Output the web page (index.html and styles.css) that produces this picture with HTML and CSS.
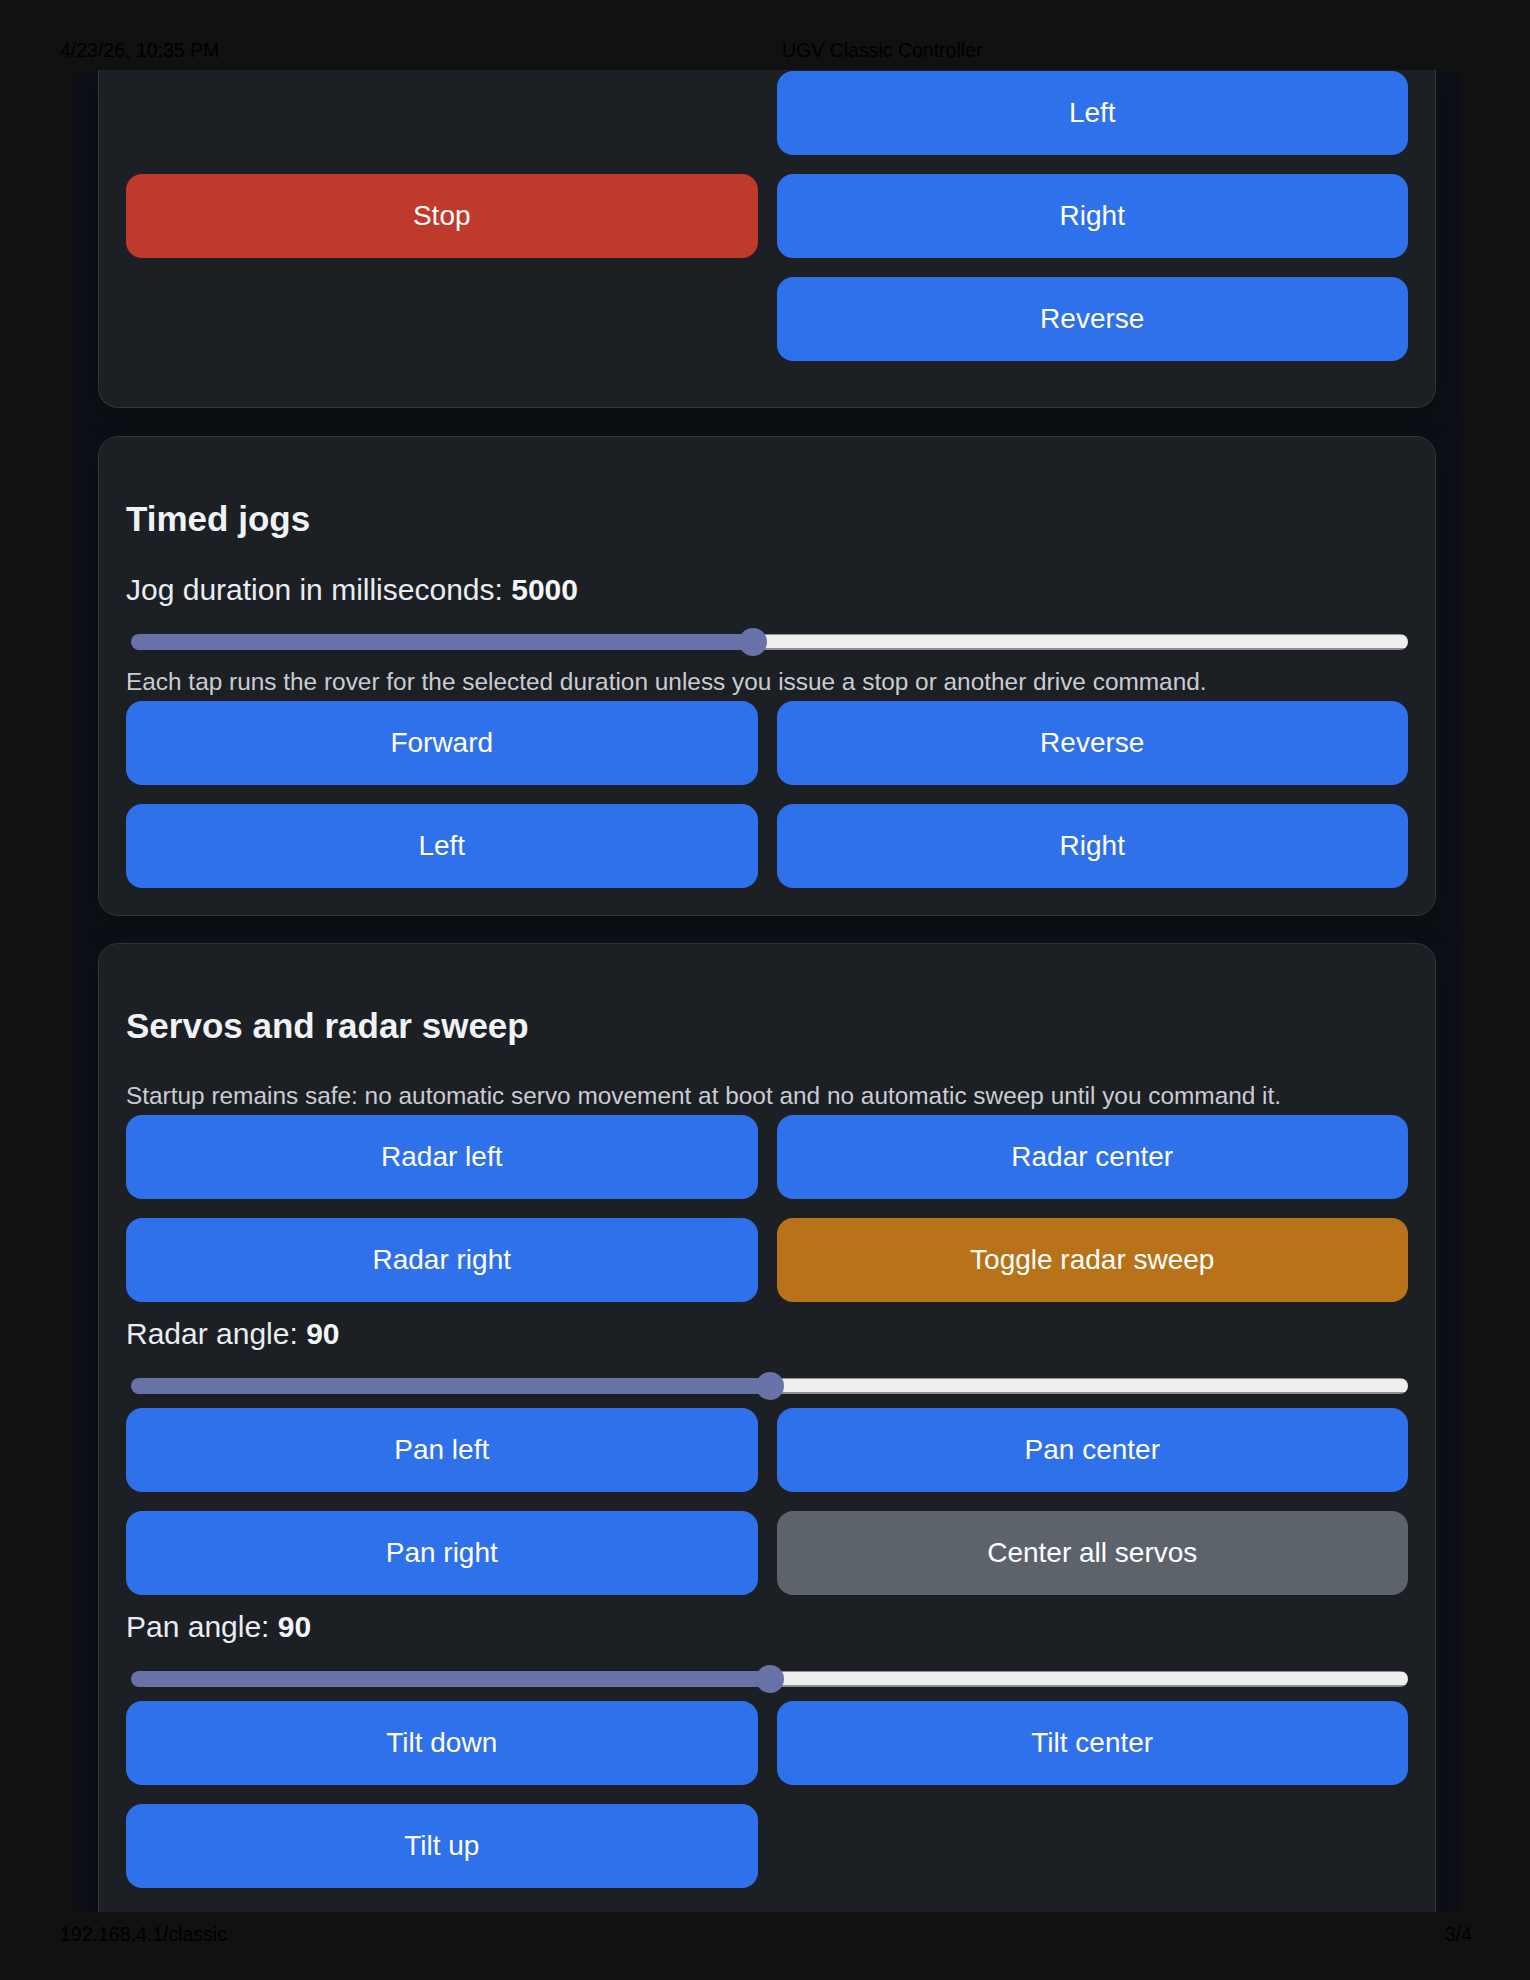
FILE: index.html
```html
<!DOCTYPE html>
<html lang="en">
<head>
<meta charset="utf-8">
<title>UGV Classic Controller</title>
<link rel="stylesheet" href="styles.css">
</head>
<body>
<header class="print-head">
  <span class="ph-date">4/23/26, 10:35 PM</span>
  <span class="ph-title">UGV Classic Controller</span>
</header>
<main class="sheet">
  <section class="card cont">
    <div class="grid">
      <div class="spacer"></div>
      <button class="btn">Left</button>
      <button class="btn red">Stop</button>
      <button class="btn">Right</button>
      <div class="spacer"></div>
      <button class="btn">Reverse</button>
    </div>
  </section>

  <section class="card">
    <h2 class="title">Timed jogs</h2>
    <div class="label">Jog duration in milliseconds: <b>5000</b></div>
    <input class="range" type="range" min="250" max="10000" step="250" value="5000" style="--p:48.8%">
    <p class="hint">Each tap runs the rover for the selected duration unless you issue a stop or another drive command.</p>
    <div class="grid">
      <button class="btn">Forward</button>
      <button class="btn">Reverse</button>
      <button class="btn">Left</button>
      <button class="btn">Right</button>
    </div>
  </section>

  <section class="card open">
    <h2 class="title">Servos and radar sweep</h2>
    <p class="hint">Startup remains safe: no automatic servo movement at boot and no automatic sweep until you command it.</p>
    <div class="grid">
      <button class="btn">Radar left</button>
      <button class="btn">Radar center</button>
      <button class="btn">Radar right</button>
      <button class="btn orange">Toggle radar sweep</button>
    </div>
    <div class="label">Radar angle: <b>90</b></div>
    <input class="range" type="range" min="0" max="180" value="90" style="--p:50.1%">
    <div class="grid">
      <button class="btn">Pan left</button>
      <button class="btn">Pan center</button>
      <button class="btn">Pan right</button>
      <button class="btn grey">Center all servos</button>
    </div>
    <div class="label">Pan angle: <b>90</b></div>
    <input class="range" type="range" min="0" max="180" value="90" style="--p:50.1%">
    <div class="grid">
      <button class="btn">Tilt down</button>
      <button class="btn">Tilt center</button>
      <button class="btn">Tilt up</button>
    </div>
  </section>
</main>
<footer class="print-foot">
  <span>192.168.4.1/classic</span>
  <span>3/4</span>
</footer>
</body>
</html>
```

FILE: styles.css
```css
html, body {
  margin: 0;
  padding: 0;
  background: #111111;
}

body {
  font-family: "Liberation Sans", Arial, Helvetica, sans-serif;
  width: 1530px;
  height: 1980px;
  overflow: hidden;
}

.print-head {
  height: 70px;
  box-sizing: border-box;
  padding: 38px 0 0 60px;
  display: grid;
  grid-template-columns: 722px auto;
  font-size: 19.5px;
  line-height: 24px;
  color: #000;
}

.sheet {
  box-sizing: border-box;
  height: 1842px;
  width: 1388px;
  margin-left: 73px;
  padding: 0 25px;
  background: #0d1117;
  overflow: hidden;
}

.card {
  display: flex;
  flex-direction: column;
  background: #1c1f24;
  border: 1px solid #30363d;
  border-radius: 20px;
  padding: 27px;
  margin-bottom: 27px;
  box-shadow: 0 8px 26px rgba(0, 0, 0, 0.35);
}

.card.cont {
  border-top: none;
  border-top-left-radius: 0;
  border-top-right-radius: 0;
  padding-top: 1px;
  padding-bottom: 46px;
  margin-bottom: 28px;
}

.card.open {
  padding-bottom: 80px;
}

.grid {
  display: grid;
  grid-template-columns: 1fr 1fr;
  gap: 19px;
}

.btn {
  height: 84px;
  border: none;
  border-radius: 16px;
  background: #2f70eb;
  color: #ffffff;
  font-family: "Liberation Sans", Arial, Helvetica, sans-serif;
  font-size: 28px;
  padding: 0;
  margin: 0;
}

.btn.red { background: #bf3a2b; }
.btn.orange { background: #b8721a; }
.btn.grey { background: #5c636b; }

.title {
  margin: 34px 0 0;
  font-size: 35px;
  line-height: 41px;
  font-weight: 700;
  color: #f0f3f6;
}

.label {
  font-size: 30px;
  line-height: 36px;
  color: #e9edf2;
}

.label b {
  font-weight: 700;
  color: #f4f6f8;
}

.title + .label { margin-top: 33px; }
.grid + .label { margin-top: 13.5px; }

.hint {
  margin: 0;
  font-size: 24.4px;
  line-height: 34px;
  color: #c9cdd3;
}

.title + .hint { margin-top: 33px; }
.range + .hint { margin-top: 9px; }
.hint + .grid { margin-top: 2px; }
.range + .grid { margin-top: 8.5px; }

.range {
  -webkit-appearance: none;
  appearance: none;
  display: block;
  height: 28px;
  width: calc(100% - 5px);
  margin: 20px 0 0 5px;
  padding: 0;
  background: transparent;
}

.range::-webkit-slider-runnable-track {
  height: 16px;
  border-radius: 8px;
  background:
    linear-gradient(to right, #6872a8 0, #6872a8 var(--p), transparent var(--p)),
    linear-gradient(to bottom, #8e8e8e 0, #8e8e8e 1.5px, #eeeeee 1.5px, #eeeeee calc(100% - 1.5px), #8e8e8e calc(100% - 1.5px));
}

.range::-webkit-slider-thumb {
  -webkit-appearance: none;
  appearance: none;
  width: 28px;
  height: 28px;
  margin-top: -6px;
  border-radius: 50%;
  background: #6872a8;
  border: none;
}

.print-foot {
  display: flex;
  justify-content: space-between;
  padding: 10px 58px 0 60px;
  font-size: 19.5px;
  line-height: 24px;
  color: #000;
}
```
